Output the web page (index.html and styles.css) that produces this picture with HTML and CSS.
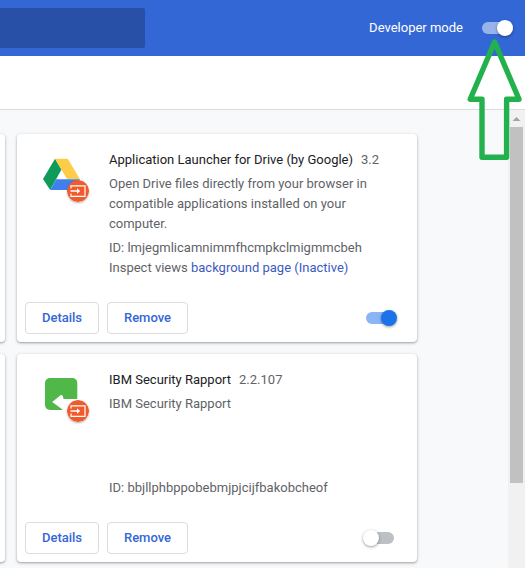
FILE: index.html
```html
<!DOCTYPE html>
<html lang="en">
<head>
<meta charset="utf-8">
<title>Extensions</title>
<link rel="stylesheet" href="styles.css">
</head>
<body>
<svg class="defs" width="0" height="0" aria-hidden="true">
  <symbol id="badge" viewBox="0 0 22 22">
    <circle cx="11" cy="11" r="11" fill="#f15a2b"/>
    <path d="M4 8.6V5.8h14v10.6H4v-2.8" fill="none" stroke="#fff" stroke-width="1.2"/>
    <path d="M3.5 11h8" fill="none" stroke="#fff" stroke-width="1.3"/>
    <path d="M10 8.2l3.2 2.8-3.2 2.8z" fill="#fff"/>
  </symbol>
</svg>
<header class="header">
  <div class="search"></div>
  <span class="dev-label">Developer mode</span>
  <span class="toggle dev"><i></i></span>
</header>
<div class="toolbar"></div>
<main class="main">
  <div class="grid">
    <article class="card"></article>
    <article class="card">
      <div class="body">
        <div class="icon">
          <svg width="50" height="50" viewBox="40 155 50 50">
            <path d="M55 158.8L61.5 169.5L50.2 190L43 179z" fill="#109a59"/>
            <path d="M55 158.8H67.7L80 179.2H67.2z" fill="#fdcd48"/>
            <path d="M56.2 179.2H80L74 190H50.2z" fill="#3f80ee"/>
          </svg>
          <svg class="badge" width="22" height="22"><use href="#badge"/></svg>
        </div>
        <div class="text">
          <div class="title"><b>Application Launcher for Drive (by Google)</b><span>3.2</span></div>
          <div class="desc">Open Drive files directly from your browser in compatible applications installed on your computer.</div>
          <div>ID: lmjegmlicamnimmfhcmpkclmigmmcbeh</div>
          <div>Inspect views <a>background page (Inactive)</a></div>
        </div>
      </div>
      <div class="actions"><button class="details">Details</button><button class="remove">Remove</button><span class="toggle on"><i></i></span></div>
    </article>
    <article class="card"></article>
    <article class="card">
      <div class="body">
        <div class="icon">
          <svg width="50" height="50" viewBox="40 375 50 50">
            <rect x="45" y="378" width="32.3" height="32" rx="5" fill="#50b848"/>
            <path d="M52.2 402L60.5 395.2Q63 394 63.5 399H78V411H62.5V409.5Z" fill="#fff"/>
          </svg>
          <svg class="badge" width="22" height="22"><use href="#badge"/></svg>
        </div>
        <div class="text">
          <div class="title"><b>IBM Security Rapport</b><span>2.2.107</span></div>
          <div class="desc tall">IBM Security Rapport</div>
          <div>ID: bbjllphbppobebmjpjcijfbakobcheof</div>
        </div>
      </div>
      <div class="actions"><button class="details">Details</button><button class="remove">Remove</button><span class="toggle off"><i></i></span></div>
    </article>
  </div>
  <div class="scrollbar"><svg width="17" height="17"><path d="M4.5 11L8.5 7L12.5 11z" fill="#a3a3a3"/></svg><div class="thumb"></div></div>
</main>
<svg class="pointer" width="60" height="130" viewBox="465 35 60 130">
  <path d="M494.6 42L470.2 99.2H482V157.2H506.6V99.2H519z" fill="none" stroke="#22b14c" stroke-width="5.4" stroke-linejoin="round"/>
</svg>
</body>
</html>
```
FILE: styles.css
```css
* { box-sizing: border-box; }
body {
  margin: 0;
  height: 568px;
  overflow: hidden;
  position: relative;
  background: #fff;
  font: 13px/20px Roboto, sans-serif;
  color: #5f6368;
  display: flex;
  flex-direction: column;
}
.defs { position: absolute; }
.header {
  flex: 0 0 56px;
  display: flex;
  align-items: center;
  padding-right: 12px;
  background: #3367d6;
  color: #fff;
}
.search {
  width: 145px;
  height: 40px;
  margin-right: auto;
  background: #2850a7;
  border-radius: 0 2px 2px 0;
}
.dev-label { margin-right: 19px; }
.toggle {
  position: relative;
  width: 28px;
  height: 12px;
  border-radius: 6px;
  background: #8bb5f4;
}
.toggle i {
  position: absolute;
  top: -2px;
  width: 16px;
  height: 16px;
  border-radius: 50%;
  box-shadow: 0 1px 3px rgba(0, 0, 0, .4);
}
.dev { width: 31px; background: #99b3ea; }
.dev i { right: 0; background: #fff; }
.on i { right: -3px; background: #1a73e8; }
.off { background: #bdc1c6; }
.off i { left: -3px; background: #fff; }
.toolbar { flex: 0 0 54px; border-bottom: 1px solid #dadce0; }
.main {
  flex: 1;
  min-height: 0;
  display: flex;
  justify-content: space-between;
  background: #f8f9fb;
}
.grid {
  display: grid;
  grid-template-columns: 400px 400px;
  grid-auto-rows: 208px;
  gap: 12px;
  margin: 24px 0 0 -395px;
}
.card {
  display: flex;
  flex-direction: column;
  background: #fff;
  border-radius: 4px;
  box-shadow: 0 1px 2px rgba(60, 64, 67, .35), 0 1px 3px 1px rgba(60, 64, 67, .12);
}
.body { flex: 1; display: flex; padding: 16px 20px 0 23px; }
.icon { position: relative; width: 69px; flex: none; padding-top: 5px; }
.badge {
  position: absolute;
  left: 27px;
  top: 30px;
  border-radius: 50%;
  box-shadow: 0 1px 2px rgba(0, 0, 0, .3);
}
.text { flex: 1; white-space: nowrap; }
.title b { font-weight: 400; color: #202124; }
.title span { margin-left: 8px; }
.desc { width: 270px; margin: 4px 0; white-space: normal; }
.tall { height: 80px; margin-bottom: 4px; }
.text a { color: #3c5bc0; }
.actions { display: flex; align-items: center; height: 49px; padding: 0 23px 0 8px; }
button {
  height: 32px;
  padding: 0;
  border: 1px solid #dadce0;
  border-radius: 4px;
  background: #fff;
  font: 500 13px Roboto, sans-serif;
  color: #3367d6;
}
.details { width: 74px; }
.remove { width: 81px; margin: 0 auto 0 8px; }
.scrollbar { width: 17px; display: flex; flex-direction: column; align-items: center; background: #f1f1f1; }
.scrollbar svg { display: block; }
.thumb { width: 13px; height: 356px; background: #c1c1c1; }
.pointer { position: absolute; left: 465px; top: 35px; }
```
